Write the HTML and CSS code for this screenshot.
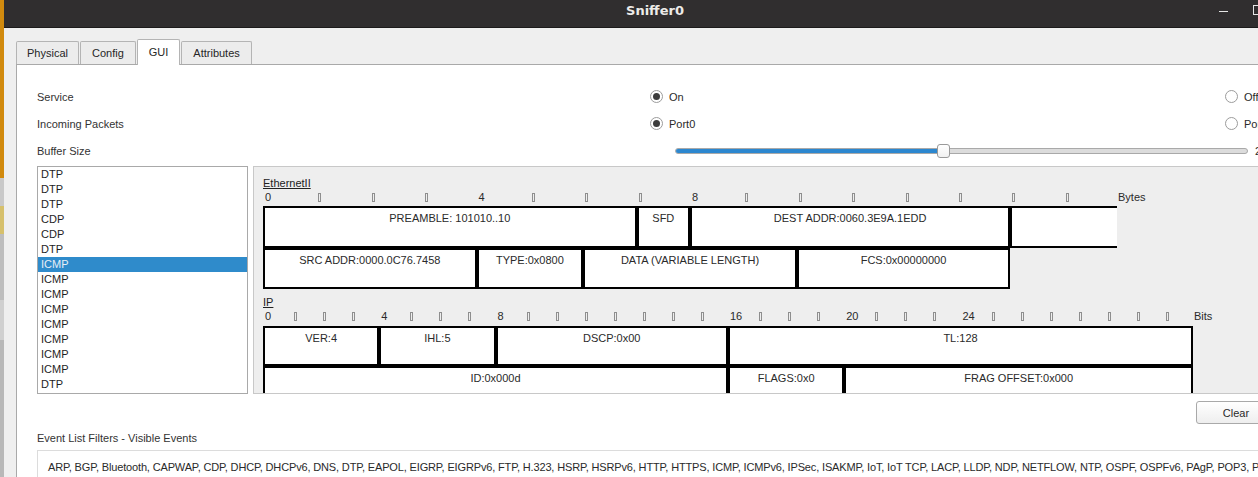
FILE: index.html
```html
<!DOCTYPE html>
<html lang="en">
<head>
<meta charset="utf-8">
<title>Sniffer0</title>
<link rel="stylesheet" href="styles.css">
</head>
<body>
<div class="screen">
  <div class="strip"></div>
  <div class="window">
    <div class="titlebar">
      <div></div>
      <div class="title">Sniffer0</div>
      <div class="controls">
        <span class="ctl min"></span>
        <span class="ctl max"></span>
        <span class="ctl close"></span>
      </div>
    </div>
    <div class="dialog">
      <div class="tabs">
        <div class="tab">Physical</div>
        <div class="tab">Config</div>
        <div class="tab active">GUI</div>
        <div class="tab">Attributes</div>
      </div>
      <div class="content">
        <div class="settings">
          <div class="label">Service</div>
          <label class="radio"><span class="dot on"></span>On</label>
          <label class="radio"><span class="dot"></span>Off</label>

          <div class="label">Incoming Packets</div>
          <label class="radio"><span class="dot on"></span>Port0</label>
          <label class="radio"><span class="dot"></span>Port1</label>

          <div class="label">Buffer Size</div>
          <div class="slider-cell">
            <div class="slider" style="--v: 268px">
              <div class="track"><div class="fill"></div></div>
              <div class="thumb"></div>
            </div>
            <span class="slider-val">20</span>
          </div>
        </div>

        <div class="main-row">
          <ul class="events">
            <li>DTP</li>
            <li>DTP</li>
            <li>DTP</li>
            <li>CDP</li>
            <li>CDP</li>
            <li>DTP</li>
            <li class="sel">ICMP</li>
            <li>ICMP</li>
            <li>ICMP</li>
            <li>ICMP</li>
            <li>ICMP</li>
            <li>ICMP</li>
            <li>ICMP</li>
            <li>ICMP</li>
            <li>DTP</li>
          </ul>

          <div class="pdu">
            <div class="pdu-head">EthernetII</div>
            <div class="ruler eth">
              <span>0</span><span><i class="tick"></i></span><span><i class="tick"></i></span><span><i class="tick"></i></span>
              <span>4</span><span><i class="tick"></i></span><span><i class="tick"></i></span><span><i class="tick"></i></span>
              <span>8</span><span><i class="tick"></i></span><span><i class="tick"></i></span><span><i class="tick"></i></span>
              <span><i class="tick"></i></span><span><i class="tick"></i></span><span><i class="tick"></i></span><span><i class="tick"></i></span>
              <span class="unit">Bytes</span>
            </div>
            <div class="fields eth r1">
              <div class="f s7">PREAMBLE: 101010..10</div>
              <div class="f s1">SFD</div>
              <div class="f s6">DEST ADDR:0060.3E9A.1EDD</div>
              <div class="f s2 open"></div>
            </div>
            <div class="fields eth r2">
              <div class="f s4">SRC ADDR:0000.0C76.7458</div>
              <div class="f s2">TYPE:0x0800</div>
              <div class="f s4">DATA (VARIABLE LENGTH)</div>
              <div class="f s4">FCS:0x00000000</div>
            </div>

            <div class="pdu-head ip-head">IP</div>
            <div class="ruler ip">
              <span>0</span><span><i class="tick"></i></span><span><i class="tick"></i></span><span><i class="tick"></i></span>
              <span>4</span><span><i class="tick"></i></span><span><i class="tick"></i></span><span><i class="tick"></i></span>
              <span>8</span><span><i class="tick"></i></span><span><i class="tick"></i></span><span><i class="tick"></i></span>
              <span><i class="tick"></i></span><span><i class="tick"></i></span><span><i class="tick"></i></span><span><i class="tick"></i></span>
              <span>16</span><span><i class="tick"></i></span><span><i class="tick"></i></span><span><i class="tick"></i></span>
              <span>20</span><span><i class="tick"></i></span><span><i class="tick"></i></span><span><i class="tick"></i></span>
              <span>24</span><span><i class="tick"></i></span><span><i class="tick"></i></span><span><i class="tick"></i></span>
              <span><i class="tick"></i></span><span><i class="tick"></i></span><span><i class="tick"></i></span><span><i class="tick"></i></span>
              <span class="unit">Bits</span>
            </div>
            <div class="fields ip r1">
              <div class="f s4">VER:4</div>
              <div class="f s4">IHL:5</div>
              <div class="f s8">DSCP:0x00</div>
              <div class="f s16">TL:128</div>
            </div>
            <div class="fields ip r2">
              <div class="f s16">ID:0x000d</div>
              <div class="f s4">FLAGS:0x0</div>
              <div class="f s12">FRAG OFFSET:0x000</div>
            </div>
          </div>
        </div>

        <div class="clear-row">
          <button class="btn" type="button">Clear</button>
        </div>

        <div class="filters-label">Event List Filters - Visible Events</div>
        <div class="filters">ARP, BGP, Bluetooth, CAPWAP, CDP, DHCP, DHCPv6, DNS, DTP, EAPOL, EIGRP, EIGRPv6, FTP, H.323, HSRP, HSRPv6, HTTP, HTTPS, ICMP, ICMPv6, IPSec, ISAKMP, IoT, IoT TCP, LACP, LLDP, NDP, NETFLOW, NTP, OSPF, OSPFv6, PAgP, POP3, PPP, PPPoED, PTP, RADIUS, REP, RIP</div>
      </div>
    </div>
  </div>
</div>
</body>
</html>
```

FILE: styles.css
```css
* { box-sizing: border-box; }

html, body {
  margin: 0;
  padding: 0;
  width: 1258px;
  height: 477px;
  overflow: hidden;
  background: #efefef;
  font-family: "Liberation Sans", Arial, sans-serif;
  font-size: 11px;
  color: #2a2a2a;
}

.screen {
  display: flex;
  height: 477px;
  overflow: hidden;
}

.strip {
  flex: 0 0 4px;
  background: linear-gradient(to bottom,
    #d18a0e 0 178px,
    #c9c9c9 178px 206px,
    #d6c06c 206px 234px,
    #bdbdbd 234px 300px,
    #d0d0d0 300px 340px,
    #b8b8b8 340px);
}

.window {
  flex: 0 0 1302px;
  display: flex;
  flex-direction: column;
  overflow: hidden;
}
.window > * { flex-shrink: 0; }

/* ---------- title bar ---------- */
.titlebar {
  height: 28px;
  background: #302e2f;
  border-bottom: 1px solid #1c1b1b;
  display: grid;
  grid-template-columns: 1fr auto 1fr;
  align-items: start;
}

.title {
  font-family: "DejaVu Sans", sans-serif;
  font-weight: bold;
  font-size: 13px;
  line-height: 16px;
  padding-top: 3px;
  color: #ecebe8;
}

.controls {
  display: flex;
  justify-content: flex-end;
  gap: 24px;
  padding-right: 9px;
  padding-top: 5px;
}

.ctl {
  width: 10px;
  height: 10px;
  position: relative;
}
.ctl.min::after {
  content: "";
  position: absolute;
  left: 0;
  right: 1px;
  top: 6px;
  height: 1px;
  background: #e6e6e6;
}
.ctl.max {
  border: 1px solid #e6e6e6;
}
.ctl.close::before,
.ctl.close::after {
  content: "";
  position: absolute;
  left: -1px;
  right: -1px;
  top: 4px;
  height: 1px;
  background: #e6e6e6;
  transform: rotate(45deg);
}
.ctl.close::after { transform: rotate(-45deg); }

/* ---------- dialog ---------- */
.dialog {
  display: flex;
  flex-direction: column;
  padding-left: 12px;
  padding-right: 12px;
}
.dialog > * { flex-shrink: 0; }

.tabs {
  display: flex;
  align-items: flex-end;
  gap: 1px;
  height: 36px;
  padding-top: 11px;
}

.tab {
  height: 23px;
  padding: 0 11px;
  line-height: 22px;
  background: #ececec;
  border: 1px solid #b4b4b4;
  border-bottom: none;
  border-radius: 2px 2px 0 0;
  color: #262626;
}
.tab:first-child { padding: 0 10px; }
.tab.active {
  height: 26px;
  background: #ffffff;
  margin-bottom: -1px;
  position: relative;
  z-index: 1;
  line-height: 24px;
  padding: 0 11px;
}

.content {
  background: #ffffff;
  border-top: 1px solid #a9a9a9;
  border-left: 1px solid #a9a9a9;
  padding: 18px 18px 0 20px;
  display: flex;
  flex-direction: column;
  height: 420px;
}
.content > * { flex-shrink: 0; }

/* ---------- settings ---------- */
.settings {
  display: grid;
  grid-template-columns: 613px 575px 1fr;
  grid-auto-rows: 27px;
  align-items: center;
}

.label { color: #333; }

.radio {
  display: flex;
  align-items: center;
  gap: 6px;
  color: #2a2a2a;
}

.dot {
  width: 13px;
  height: 13px;
  border: 1px solid #9c9c9c;
  border-radius: 50%;
  background: #fff;
  display: grid;
  place-items: center;
}
.dot.on::after {
  content: "";
  width: 7px;
  height: 7px;
  border-radius: 50%;
  background: #3c3c3c;
}

.slider-cell {
  grid-column: 2 / 4;
  display: flex;
  align-items: center;
  padding-left: 25px;
  gap: 7px;
}

.slider {
  position: relative;
  width: 573px;
  height: 14px;
  display: flex;
  align-items: center;
}

.track {
  width: 100%;
  height: 6px;
  border: 1px solid #a9a9a9;
  border-radius: 3px;
  background: #dcdcdc;
  overflow: hidden;
}
.fill {
  width: var(--v);
  height: 100%;
  background: #2c87cf;
}
.thumb {
  position: absolute;
  left: calc(var(--v) - 6px);
  top: 0;
  width: 13px;
  height: 14px;
  border: 1px solid #9a9a9a;
  border-radius: 3px;
  background: linear-gradient(#ffffff, #f1f1f1);
}

/* ---------- list + pdu ---------- */
.main-row {
  display: flex;
  gap: 5px;
  margin-top: 2px;
  height: 228px;
}

.events {
  list-style: none;
  margin: 0;
  padding: 0;
  flex: 0 0 211px;
  border: 1px solid #a9a9a9;
  background: #fff;
  overflow: hidden;
}
.events li {
  height: 15px;
  line-height: 15px;
  padding-left: 3px;
  color: #1e1e1e;
}
.events li.sel {
  background: #2f8bcb;
  color: #e8eef6;
}

.pdu {
  flex: 1;
  border: 1px solid #c8c8c8;
  background: #eeeeee;
  overflow: hidden;
  padding: 9px 0 0 9px;
}

.pdu-head {
  height: 14px;
  line-height: 14px;
  text-decoration: underline;
  color: #222;
}
.ip-head { margin-top: 6px; }

.ruler {
  display: grid;
  height: 15px;
  line-height: 15px;
  color: #2a2a2a;
}
.ruler.eth { grid-template-columns: repeat(16, 53.375px) auto; }
.ruler.ip { grid-template-columns: repeat(32, 29.0625px) auto; margin-bottom: 2px; }
.ruler span { padding-left: 2px; white-space: nowrap; }
.ruler .unit { padding-left: 1px; }

.tick {
  display: inline-block;
  width: 3px;
  height: 9px;
  border: 1px solid #8e8e8e;
  vertical-align: -1px;
}

.fields { display: grid; }
.fields.eth { grid-template-columns: repeat(16, 53.375px); }
.fields.ip { grid-template-columns: repeat(32, 29.0625px); }
.fields.eth.r1 { margin-top: 1px; height: 42px; }
.fields.eth.r2 { height: 41px; }
.fields.ip.r1 { height: 40px; }
.fields.ip.r2 { height: 40px; }

.f {
  border: 2px solid #000;
  background: #fff;
  text-align: center;
  line-height: 14px;
  padding-top: 3px;
  color: #2a2a2a;
  white-space: nowrap;
  overflow: hidden;
}
.f.open { border-right: none; }

.s1 { grid-column: span 1; }
.s2 { grid-column: span 2; }
.s4 { grid-column: span 4; }
.s6 { grid-column: span 6; }
.s7 { grid-column: span 7; }
.s8 { grid-column: span 8; }
.s12 { grid-column: span 12; }
.s16 { grid-column: span 16; }

/* ---------- bottom ---------- */
.clear-row {
  display: flex;
  justify-content: flex-end;
  margin-top: 7px;
}

.btn {
  width: 80px;
  height: 23px;
  font-family: inherit;
  font-size: 11px;
  color: #2a2a2a;
  background: linear-gradient(#ffffff, #eeeeee);
  border: 1px solid #a9a9a9;
  border-radius: 3px;
  padding: 0;
}

.filters-label {
  margin-top: 7px;
  height: 14px;
  line-height: 14px;
  color: #333;
}

.filters {
  margin-top: 5px;
  border: 1px solid #dcdcdc;
  padding: 9px 10px;
  line-height: 14px;
  letter-spacing: -0.15px;
  white-space: nowrap;
  overflow: hidden;
  color: #2a2a2a;
}
```
